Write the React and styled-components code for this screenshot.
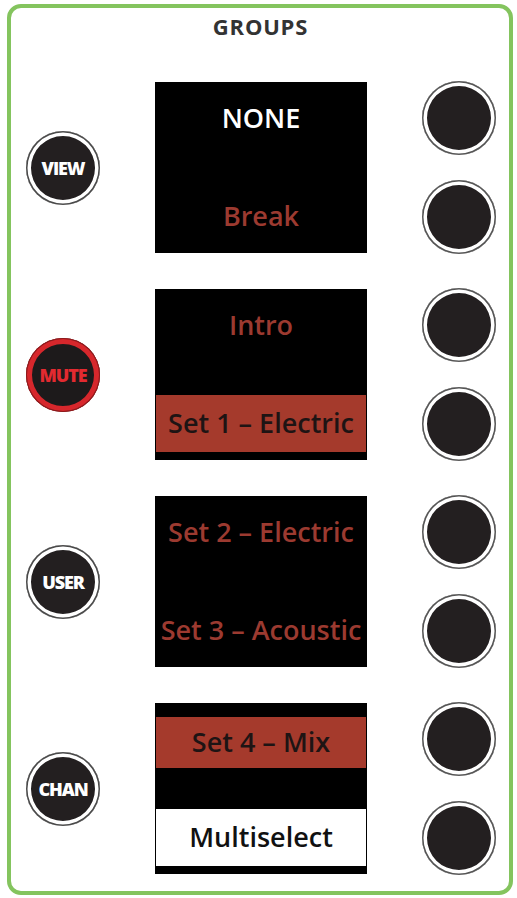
import React from "react";
import styled, { createGlobalStyle } from "styled-components";

const Global = createGlobalStyle`
  html, body { margin: 0; padding: 0; background: #ffffff; }
  body { font-family: "Open Sans", "DejaVu Sans", sans-serif; }
  * { box-sizing: border-box; }
`;

const Page = styled.div`
  padding: 4px 4px 3px 7px;
  width: 517px;
`;

const Panel = styled.section`
  width: 506px;
  height: 891px;
  border: 4px solid #84c45e;
  border-radius: 14px;
  padding: 6px 12px 0 15px;
  display: flex;
  flex-direction: column;
`;

const Title = styled.h1`
  margin: 0;
  height: 24px;
  line-height: 24px;
  text-align: center;
  font-size: 22px;
  font-weight: 700;
  letter-spacing: 0.8px;
  color: #333333;
  padding-right: 2px;
`;

const Rows = styled.div`
  margin-top: 44px;
  display: flex;
  flex-direction: column;
  gap: 36px;
`;

const Row = styled.div`
  display: grid;
  grid-template-columns: 74px 212px 74px;
  column-gap: 55px;
  height: 171px;
`;

const SideButton = styled.div`
  align-self: center;
  width: 74px;
  height: 74px;
  border-radius: 50%;
  display: flex;
  align-items: center;
  justify-content: center;
  background: ${(p) => (p.$mute ? "#1d1a1b" : "#231f20")};
  box-shadow: ${(p) =>
    p.$mute
      ? "inset 0 0 0 1px #8a1a1c, inset 0 0 0 6px #d7272c"
      : "inset 0 0 0 1.5px #4a4a4a, inset 0 0 0 5px #ffffff"};
  color: ${(p) => (p.$mute ? "#e32a30" : "#ffffff")};
  font-family: "Open Sans", sans-serif;
  font-weight: 800;
  font-size: 18px;
  letter-spacing: -1.1px;
  line-height: 1;
  padding-bottom: 1px;
`;

const Screen = styled.div`
  width: 212px;
  height: 171px;
  background: #000000;
  padding: 8px 1px;
  display: flex;
  flex-direction: column;
  justify-content: space-between;
`;

const Slot = styled.div`
  height: ${(p) => (p.$shift ? `${57 - p.$shift}px` : "57px")};
  margin-top: ${(p) => (p.$shift ? `${p.$shift}px` : "0")};
  display: flex;
  align-items: center;
  justify-content: center;
  white-space: nowrap;
  font-size: 27px;
  font-weight: 600;
  line-height: 1;
  padding-bottom: 2px;
  background: ${(p) =>
    p.$fill === "red" ? "#a53a2c" : p.$fill === "white" ? "#ffffff" : "transparent"};
  color: ${(p) =>
    p.$fill === "red"
      ? "#1e1414"
      : p.$fill === "white"
      ? "#111111"
      : p.$tone === "white"
      ? "#ffffff"
      : "#9c3a30"};
`;

const KnobColumn = styled.div`
  display: flex;
  flex-direction: column;
  gap: 25px;
  margin-top: -1px;
`;

const Knob = styled.div`
  width: 74px;
  height: 74px;
  border-radius: 50%;
  background: #231f20;
  box-shadow: inset 0 0 0 1.5px #555555, inset 0 0 0 5px #ffffff;
`;

const rows = [
  {
    button: "VIEW",
    slots: [
      { text: "NONE", tone: "white" },
      { text: "Break" },
    ],
  },
  {
    button: "MUTE",
    mute: true,
    slots: [{ text: "Intro" }, { text: "Set 1 – Electric", fill: "red" }],
  },
  {
    button: "USER",
    slots: [{ text: "Set 2 – Electric" }, { text: "Set 3 – Acoustic" }],
  },
  {
    button: "CHAN",
    slots: [
      { text: "Set 4 – Mix", fill: "red", shift: 6 },
      { text: "Multiselect", fill: "white" },
    ],
  },
];

export default function App() {
  return (
    <>
      <Global />
      <Page>
        <Panel>
          <Title>GROUPS</Title>
          <Rows>
            {rows.map((r) => (
              <Row key={r.button}>
                <SideButton $mute={r.mute}>{r.button}</SideButton>
                <Screen>
                  {r.slots.map((s) => (
                    <Slot key={s.text} $fill={s.fill} $tone={s.tone} $shift={s.shift}>
                      {s.text}
                    </Slot>
                  ))}
                </Screen>
                <KnobColumn>
                  <Knob />
                  <Knob />
                </KnobColumn>
              </Row>
            ))}
          </Rows>
        </Panel>
      </Page>
    </>
  );
}
